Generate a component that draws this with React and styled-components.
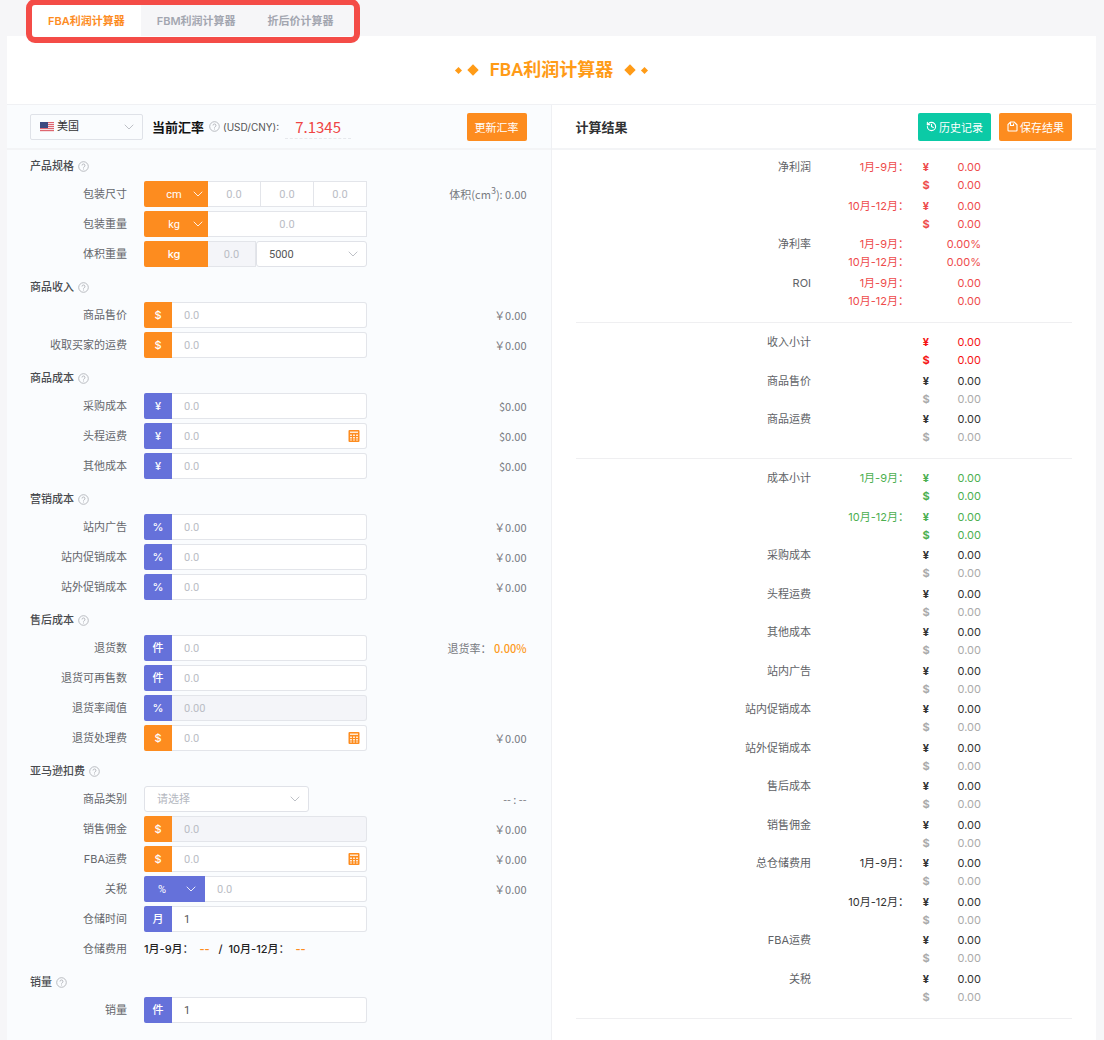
import styled, { createGlobalStyle } from "styled-components";
import { ChevronDown, History } from "lucide-react";

const GlobalStyle = createGlobalStyle`
  * {
    box-sizing: border-box;
  }

  body {
    margin: 0;
    background: #f6f6f8;
    color: #303133;
    font-family: Inter, "Noto Sans CJK SC", sans-serif;
    font-size: 11px;
    line-height: 18px;
  }

  button,
  input,
  select {
    font-family: Roboto, "Noto Sans CJK SC", sans-serif;
    font-size: 11px;
  }

  h1,
  h2,
  h3 {
    margin: 0;
  }
`;

const orange = "#fd8c1f";
const violet = "#6571da";

const Page = styled.div`
  padding: 4px 8px 0 7px;
`;

const Tabs = styled.nav`
  position: relative;
  display: flex;
  width: fit-content;
  margin-left: 25px;
  padding-right: 4px;

  &::after {
    content: "";
    position: absolute;
    inset: -5px -6px -7px;
    border: 6px solid #f44c47;
    border-radius: 9px;
    pointer-events: none;
  }
`;

const Tab = styled.button`
  height: 32px;
  padding: 0 16px;
  border: 0;
  background: ${(p) => (p.$active ? "#fff" : "transparent")};
  color: ${(p) => (p.$active ? orange : "#a3a6b0")};
  font-family: Inter, "Noto Sans CJK SC", sans-serif;
  font-weight: 600;
`;

const Card = styled.main`
  background: #fff;
`;

const TitleBar = styled.header`
  display: flex;
  align-items: center;
  justify-content: center;
  gap: 8px;
  height: 69px;
  border-bottom: 1px solid #f0f1f4;
`;

const Title = styled.h1`
  margin: 0 5px;
  color: #ff9b17;
  font-family: Roboto, "Noto Sans CJK SC", sans-serif;
  font-size: 18px;
  font-weight: 600;
  line-height: 24px;
`;

const Diamond = styled.i`
  width: ${(p) => (p.$small ? 5 : 8)}px;
  height: ${(p) => (p.$small ? 5 : 8)}px;
  background: #ff9b17;
  transform: rotate(45deg);
`;

const Columns = styled.div`
  display: grid;
  grid-template-columns: 1fr 1fr;
`;

const Panel = styled.section`
  background: ${(p) => (p.$tinted ? "#fafcfe" : "#fff")};
  border-right: ${(p) => (p.$tinted ? "1px solid #eff0f3" : "0")};
`;

const Toolbar = styled.div`
  display: flex;
  align-items: center;
  height: 45px;
  padding: 0 24px 0 23px;
  border-bottom: 2px solid #f3f4f6;

  ${Panel}:last-child > & {
    padding-left: 24px;
  }
`;

const Country = styled.div`
  position: relative;
  display: flex;
  align-items: center;
  width: 113px;
  height: 26px;
  margin-right: 9px;
  border: 1px solid #dfe2e8;
  border-radius: 2px;

  > svg:first-child {
    position: absolute;
    left: 9px;
    pointer-events: none;
  }
`;

const RateTitle = styled.h2`
  margin-right: 5px;
  color: #111;
  font-size: 13px;
  font-weight: 700;
`;

const Pair = styled.span`
  margin-left: 3px;
  color: #555;
  font-size: 10px;
`;

const Rate = styled.input`
  width: 66px;
  height: 24px;
  margin-left: 6px;
  padding: 0;
  border: 0;
  border-bottom: 1px dashed #e6e8ec;
  background: none;
  color: #ef4444;
  font-family: "Noto Sans CJK SC", sans-serif;
  font-size: 15px;
  text-align: center;
`;

const Button = styled.button`
  display: flex;
  align-items: center;
  justify-content: center;
  gap: 2px;
  height: 28px;
  padding: 0 8px;
  border: 0;
  border-radius: 2px;
  background: ${(p) => p.$color};
  color: #fff;
`;

const Actions = styled.div`
  display: flex;
  gap: 8px;
  margin-left: auto;
`;

const ResultTitle = styled.h2`
  font-size: 13px;
  font-weight: 600;
`;

const Form = styled.form`
  display: flex;
  flex-direction: column;
  gap: 11px;
  padding: 7px 24px 18px 23px;
`;

const Group = styled.section`
  display: flex;
  flex-direction: column;
  gap: 4px;
`;

const GroupTitle = styled.h3`
  display: flex;
  align-items: center;
  gap: 4px;
  height: 18px;
  margin-bottom: 2px;
  color: #4a4c50;
  font-size: 11px;
  font-weight: 500;
`;

const Row = styled.div`
  display: flex;
  align-items: center;
  height: 26px;
`;

const Label = styled.label`
  width: 97px;
  margin-right: 17px;
  color: #65676c;
  text-align: right;
`;

const Control = styled.div`
  display: flex;
  width: ${(p) => p.$width || 223}px;
  height: 26px;
`;

const Aside = styled.output`
  margin-left: auto;
  color: #77797e;
  font-family: "Noto Sans CJK SC", sans-serif;

  sup {
    font-size: 9px;
    line-height: 0;
  }

  b {
    color: #fd9a22;
    font-weight: 500;
  }
`;

const Unit = styled.span`
  display: flex;
  align-items: center;
  justify-content: center;
  flex: none;
  width: ${(p) => p.$width || 28}px;
  padding-right: ${(p) => (p.$width ? 4 : 0)}px;
  border-radius: 2px 0 0 2px;
  background: ${(p) => p.$color};
  color: #fff;
  font-weight: 500;
`;

const Field = styled.div`
  display: flex;
  align-items: center;
  flex: 1;
  min-width: 0;
  border: 1px solid #e3e5ea;
  border-left-width: ${(p) => (p.$first ? 0 : 1)}px;
  border-radius: ${(p) => (p.$square ? "0" : "0 3px 3px 0")};
  background: ${(p) => (p.$disabled ? "#f4f5f9" : "#fff")};

  & + & {
    border-left: 0;
  }
`;

const Input = styled.input`
  flex: 1;
  width: 0;
  height: 24px;
  padding: ${(p) => (p.$center ? "0" : "0 11px 0 12px")};
  border: 0;
  background: none;
  color: #555;
  text-align: ${(p) => (p.$center ? "center" : "left")};

  &::placeholder {
    color: #babdc5;
  }
`;

const CalcButton = styled.button`
  display: flex;
  margin-right: 6px;
  padding: 0;
  border: 0;
  background: none;
`;

const SelectBox = styled.div`
  position: relative;
  flex: ${(p) => (p.$width ? "none" : 1)};
  width: ${(p) => p.$width}px;
  height: 26px;
  border: ${(p) => (p.$color ? "0" : "1px solid #e0e2e8")};
  border-radius: ${(p) => (p.$color ? "2px 0 0 2px" : "3px")};
  background: ${(p) => p.$color || "#fff"};
`;

const Select = styled.select`
  appearance: none;
  width: 100%;
  height: 100%;
  padding: 0 ${(p) => p.$right || 0}px 0 ${(p) => p.$left || 0}px;
  border: 0;
  outline: 0;
  background: none;
  color: ${(p) => p.$color || "#555"};
  text-align-last: ${(p) => (p.$center ? "center" : "left")};
`;

const Arrow = styled(ChevronDown)`
  position: absolute;
  top: 50%;
  right: ${(p) => p.$right}px;
  margin-top: -8px;
  pointer-events: none;
`;

const Storage = styled.p`
  margin: 0;
  color: #222;
  font-weight: 500;
  white-space: pre;
`;

const Fee = styled.b`
  color: #fd8c1f;
  font-weight: 600;
`;

const Results = styled.div`
  padding: 6px 24px 20px;
`;

const Table = styled.table`
  width: 100%;
  margin-bottom: 8px;
  padding-bottom: 12px;
  border-bottom: 1px solid #efeff1;
  border-spacing: 0;
  table-layout: fixed;
`;

const Lines = styled.tbody`
  color: ${(p) => p.$color || "#333"};

  > tr:first-child > * {
    padding-top: 2px;
  }

  &:nth-of-type(even) > tr:first-child > * {
    padding-top: 3px;
  }

  > tr:last-child {
    color: ${(p) => p.$color || "#aaa"};
  }
`;

const Name = styled.th`
  padding: 0;
  color: #606266;
  font-weight: 400;
  text-align: right;
`;

const Cell = styled.td`
  height: 18px;
  padding: 0;
  font-weight: ${(p) => (p.$bold ? 700 : 400)};
  text-align: ${(p) => (p.$bold ? "center" : "right")};
  white-space: nowrap;
`;

const HelpIcon = () => (
  <svg width="11" height="11" viewBox="0 0 22 22" fill="none" stroke="#a9acb2" strokeWidth="1.6">
    <circle cx="11" cy="11" r="9.6" />
    <path d="M8 9a3 3 0 1 1 4.2 2.7c-.8.4-1.2.9-1.2 1.8" />
    <path d="M11 15v2" />
  </svg>
);

const FlagIcon = () => (
  <svg width="14" height="10" viewBox="0 0 14 10">
    <path fill="#f3dfe2" d="M0 0h14v10H0z" />
    <path stroke="#df6670" d="M0 .5h14M0 2.5h14M0 4.5h14M0 6.5h14M0 8.5h14" />
    <path fill="#3c4a80" d="M0 0h8v6H0z" />
  </svg>
);

const CalcIcon = () => (
  <svg width="12" height="12" viewBox="0 0 24 24">
    <rect x="1" y="0" width="22" height="24" rx="2" fill={orange} />
    <path
      fill="#ffe9d2"
      d="M4 3h16v3H4zM4 9h4v3H4zM10 9h4v3h-4zM16 9h4v3h-4zM4 14h4v3H4zM10 14h4v3h-4zM16 14h4v3h-4zM4 19h4v2H4zM10 19h4v2h-4zM16 19h4v2h-4z"
    />
  </svg>
);

const SaveIcon = () => (
  <svg width="11" height="11" viewBox="0 0 22 22" fill="none" stroke="#fff" strokeWidth="2.2">
    <path d="M2 7v11.500a1.500 1.500 0 0 0 1.500 1.500h15a1.500 1.500 0 0 0 1.500-1.500V7.500L14.500 2H7z" />
    <path d="M7 2v7h6V5" />
  </svg>
);

const groups = [
  {
    title: "产品规格",
    rows: [
      { label: "包装尺寸", kind: "size", aside: <>体积(cm<sup>3</sup>): 0.00</> },
      { label: "包装重量", kind: "weight" },
      { label: "体积重量", kind: "volume" },
    ],
  },
  {
    title: "商品收入",
    rows: [
      { label: "商品售价", unit: "$", aside: "￥0.00" },
      { label: "收取买家的运费", unit: "$", aside: "￥0.00" },
    ],
  },
  {
    title: "商品成本",
    rows: [
      { label: "采购成本", unit: "¥", aside: "$0.00" },
      { label: "头程运费", unit: "¥", calc: true, aside: "$0.00" },
      { label: "其他成本", unit: "¥", aside: "$0.00" },
    ],
  },
  {
    title: "营销成本",
    rows: [
      { label: "站内广告", unit: "%", aside: "￥0.00" },
      { label: "站内促销成本", unit: "%", aside: "￥0.00" },
      { label: "站外促销成本", unit: "%", aside: "￥0.00" },
    ],
  },
  {
    title: "售后成本",
    rows: [
      { label: "退货数", unit: "件", aside: <>退货率： <b>0.00%</b></> },
      { label: "退货可再售数", unit: "件" },
      { label: "退货率阈值", unit: "%", placeholder: "0.00", disabled: true },
      { label: "退货处理费", unit: "$", calc: true, aside: "￥0.00" },
    ],
  },
  {
    title: "亚马逊扣费",
    rows: [
      { label: "商品类别", kind: "category", aside: "-- : --" },
      { label: "销售佣金", unit: "$", disabled: true, aside: "￥0.00" },
      { label: "FBA运费", unit: "$", calc: true, aside: "￥0.00" },
      { label: "关税", kind: "tax", aside: "￥0.00" },
      { label: "仓储时间", unit: "月", value: "1" },
      { label: "仓储费用", kind: "storage" },
    ],
  },
  { title: "销量", rows: [{ label: "销量", unit: "件", value: "1" }] },
];

const money = (name, period, color) => ({
  name,
  period,
  color,
  lines: [
    ["¥", "0.00"],
    ["$", "0.00"],
  ],
});

const red = "#ee4b4b";
const green = "#4caf50";

const periods = (name, value) => ({
  name,
  color: red,
  lines: [
    ["", value, "1月-9月："],
    ["", value, "10月-12月："],
  ],
});

const tables = [
  [
    money("净利润", "1月-9月：", red),
    money("", "10月-12月：", red),
    periods("净利率", "0.00%"),
    periods("ROI", "0.00"),
  ],
  [money("收入小计", "", "#f51414"), money("商品售价"), money("商品运费")],
  [
    money("成本小计", "1月-9月：", green),
    money("", "10月-12月：", green),
    money("采购成本"),
    money("头程运费"),
    money("其他成本"),
    money("站内广告"),
    money("站内促销成本"),
    money("站外促销成本"),
    money("售后成本"),
    money("销售佣金"),
    money("总仓储费用", "1月-9月："),
    money("", "10月-12月："),
    money("FBA运费"),
    money("关税"),
  ],
];

function UnitSelect({ id, label, options, color, width, right, arrow }) {
  return (
    <SelectBox $width={width} $color={color}>
      <Select id={id} aria-label={label} $color="#fff" $center $right={right}>
        {options.map((o) => (
          <option key={o}>{o}</option>
        ))}
      </Select>
      <Arrow size={16} color="#fff" strokeWidth={1.3} $right={arrow} />
    </SelectBox>
  );
}

function RowControl({ row, id }) {
  switch (row.kind) {
    case "size":
      return (
        <Control>
          <UnitSelect label="尺寸单位" options={["cm", "in"]} color={orange} width={64} right={4} arrow={2} />
          <Field $square $first>
            <Input id={id} placeholder="0.0" $center />
          </Field>
          <Field $square>
            <Input aria-label="宽" placeholder="0.0" $center />
          </Field>
          <Field $square>
            <Input aria-label="高" placeholder="0.0" $center />
          </Field>
        </Control>
      );
    case "weight":
      return (
        <Control>
          <UnitSelect label="重量单位" options={["kg", "lb"]} color={orange} width={64} right={4} arrow={2} />
          <Field $square $first>
            <Input id={id} placeholder="0.0" $center />
          </Field>
        </Control>
      );
    case "volume":
      return (
        <Control>
          <Unit $color={orange} $width={64}>
            kg
          </Unit>
          <Field $square $first $disabled>
            <Input id={id} placeholder="0.0" disabled $center />
          </Field>
          <SelectBox $width={111}>
            <Select aria-label="体积系数" $left={12}>
              <option>5000</option>
              <option>6000</option>
            </Select>
            <Arrow size={16} color="#b4b7be" strokeWidth={1.3} $right={5} />
          </SelectBox>
        </Control>
      );
    case "category":
      return (
        <Control $width={165}>
          <SelectBox>
            <Select id={id} $color="#b5b8bf" $left={12}>
              <option>请选择</option>
            </Select>
            <Arrow size={16} color="#b4b7be" strokeWidth={1.3} $right={5} />
          </SelectBox>
        </Control>
      );
    case "tax":
      return (
        <Control>
          <UnitSelect id={`${id}-unit`} label="关税单位" options={["%", "$"]} color={violet} width={61} right={25} arrow={6} />
          <Field $first>
            <Input id={id} placeholder="0.0" />
          </Field>
        </Control>
      );
    case "storage":
      return (
        <Storage>
          1月-9月：{"  "}
          <Fee>--</Fee>
          {"   /  "}10月-12月：{"  "}
          <Fee>--</Fee>
        </Storage>
      );
    default:
      return (
        <Control>
          <Unit $color={row.unit === "$" ? orange : violet}>{row.unit}</Unit>
          <Field $first $disabled={row.disabled}>
            <Input
              id={id}
              placeholder={row.placeholder || "0.0"}
              defaultValue={row.value}
              disabled={row.disabled}
            />
            {row.calc && (
              <CalcButton type="button" aria-label={`计算${row.label}`}>
                <CalcIcon />
              </CalcButton>
            )}
          </Field>
        </Control>
      );
  }
}

function FormRow({ row, id }) {
  return (
    <Row>
      {row.kind === "storage" ? (
        <Label as="span">{row.label}</Label>
      ) : (
        <Label htmlFor={id}>{row.label}</Label>
      )}
      <RowControl row={row} id={id} />
      {row.aside && <Aside>{row.aside}</Aside>}
    </Row>
  );
}

function ResultTable({ items }) {
  return (
    <Table>
      <colgroup>
        <col />
        <col width="98" />
        <col width="34" />
        <col width="38" />
        <col width="91" />
      </colgroup>
      {items.map((item, i) => (
        <Lines key={i} $color={item.color}>
          {item.lines.map(([currency, amount, period], n) => (
            <tr key={n}>
              <Name scope="row">{n === 0 ? item.name : ""}</Name>
              <Cell>{period || (n === 0 ? item.period : "")}</Cell>
              <Cell $bold>{currency}</Cell>
              <Cell>{amount}</Cell>
              <Cell />
            </tr>
          ))}
        </Lines>
      ))}
    </Table>
  );
}

function App() {
  return (
    <Page>
      <GlobalStyle />
      <Tabs>
        <Tab $active>FBA利润计算器</Tab>
        <Tab>FBM利润计算器</Tab>
        <Tab>折后价计算器</Tab>
      </Tabs>
      <Card>
        <TitleBar>
          <Diamond $small />
          <Diamond />
          <Title>FBA利润计算器</Title>
          <Diamond />
          <Diamond $small />
        </TitleBar>
        <Columns>
          <Panel $tinted>
            <Toolbar>
              <Country>
                <FlagIcon />
                <Select aria-label="国家" $left={26} $color="#333">
                  <option>美国</option>
                </Select>
                <Arrow size={16} color="#b4b7be" strokeWidth={1.3} $right={5} />
              </Country>
              <RateTitle>当前汇率</RateTitle>
              <HelpIcon />
              <Pair>(USD/CNY):</Pair>
              <Rate aria-label="当前汇率" defaultValue="7.1345" />
              <Actions>
                <Button $color={orange}>更新汇率</Button>
              </Actions>
            </Toolbar>
            <Form>
              {groups.map((group, g) => (
                <Group key={group.title}>
                  <GroupTitle>
                    {group.title}
                    <HelpIcon />
                  </GroupTitle>
                  {group.rows.map((row, r) => (
                    <FormRow key={row.label} row={row} id={`field-${g}-${r}`} />
                  ))}
                </Group>
              ))}
            </Form>
          </Panel>
          <Panel>
            <Toolbar>
              <ResultTitle>计算结果</ResultTitle>
              <Actions>
                <Button $color="#0bcaa6">
                  <History size={11} strokeWidth={2.4} />
                  历史记录
                </Button>
                <Button $color={orange}>
                  <SaveIcon />
                  保存结果
                </Button>
              </Actions>
            </Toolbar>
            <Results>
              {tables.map((items, i) => (
                <ResultTable key={i} items={items} />
              ))}
            </Results>
          </Panel>
        </Columns>
      </Card>
    </Page>
  );
}

export default App;
